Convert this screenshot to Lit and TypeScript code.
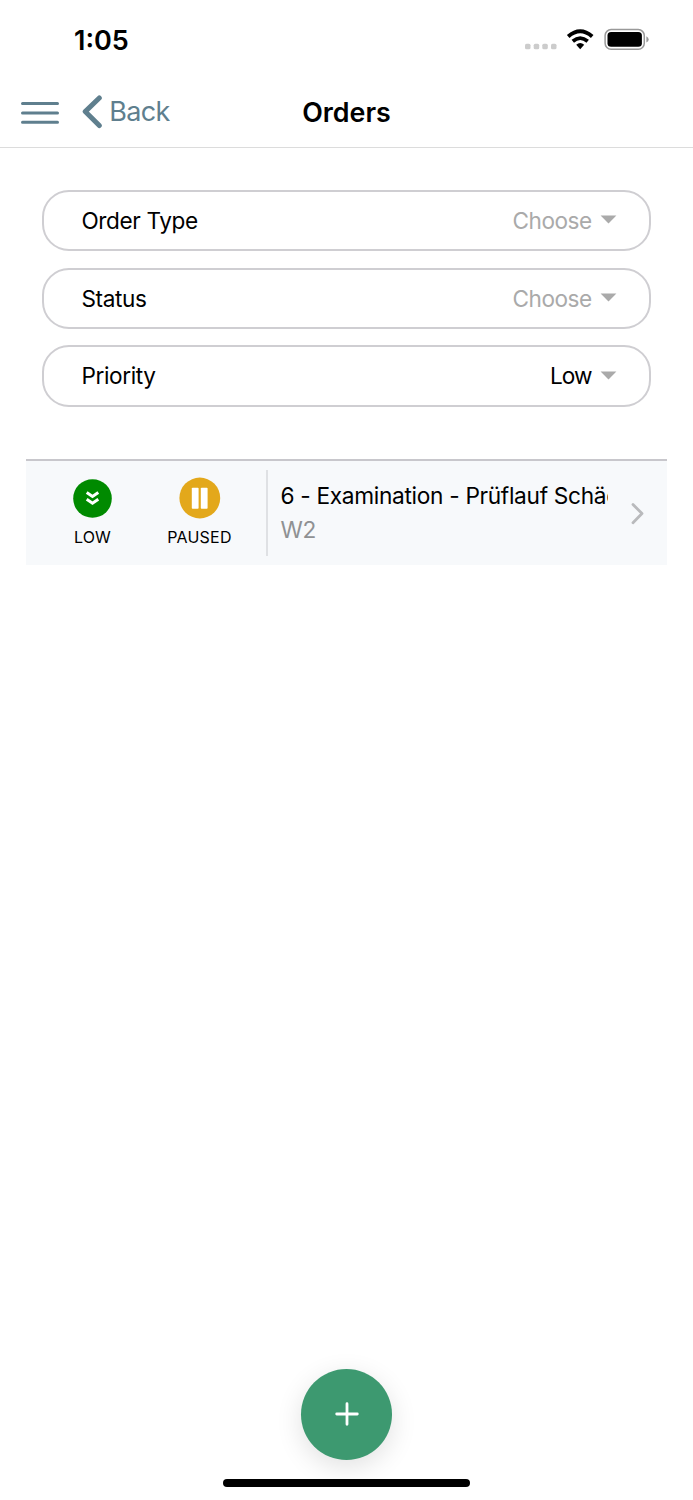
import { LitElement, html, svg, css } from "lit";
import { customElement, property } from "lit/decorators.js";

@customElement("filter-select")
class FilterSelect extends LitElement {
  @property() label = "";
  @property() value = "";

  static styles = css`
    :host { display: block; }
    .field {
      box-sizing: border-box;
      height: 61.2px;
      border: 2px solid #cfced2;
      border-radius: 27px;
      padding: 0 32.2px 0 37.4px;
      display: flex;
      align-items: center;
      font-size: 22.6px;
      letter-spacing: -0.38px;
      color: #000;
    }
    .label { flex: 1; }
    .placeholder { color: #aaa; letter-spacing: -0.5px; }
    .value { letter-spacing: -0.9px; }
    .arrow { margin: 0 0 1.5px 8.2px; display: block; }
  `;

  render() {
    return html`<div class="field">
      <span class="label">${this.label}</span>
      <span class=${this.value ? "value" : "placeholder"}>${this.value || "Choose"}</span>
      <svg class="arrow" width="17" height="9" viewBox="0 0 17 9"><path d="M.6 .4H16.4L8.5 8.4z" fill="#aaa" /></svg>
    </div>`;
  }
}

@customElement("app-root")
class AppRoot extends LitElement {
  static styles = css`
    :host {
      display: flex;
      flex-direction: column;
      box-sizing: border-box;
      width: 693px;
      height: 1500px;
      overflow: hidden;
      background: #fff;
      color: #000;
      font-family: Inter, "Liberation Sans", sans-serif;
      white-space: nowrap;
    }
    svg { display: block; flex: none; }
    .status { height: 79px; display: flex; align-items: center; padding: 1px 44px 0 74px; box-sizing: border-box; }
    .time { flex: 1; font-size: 27px; font-weight: 600; }
    .bar {
      height: 69px;
      box-sizing: border-box;
      border-bottom: 1px solid #dcdcdc;
      display: grid;
      grid-template-columns: 1fr auto 1fr;
      align-items: center;
      padding-bottom: 2px;
    }
    .nav { display: flex; align-items: center; padding-left: 21px; color: #5f7f8e; }
    .menu { margin-top: 2px; }
    .chevron { margin: 0 6.2px 0 23px; }
    .back { font-size: 27px; letter-spacing: -0.65px; padding-bottom: 1px; }
    .title { font-size: 26.8px; font-weight: 600; }
    .filters { display: grid; gap: 16.5px; padding: 42px 42px 52px; }
    .row {
      margin: 0 26px;
      height: 106.5px;
      box-sizing: border-box;
      border-top: 2px solid #c8c7cc;
      background: #f7f9fb;
      display: flex;
    }
    .badges { width: 240px; display: flex; box-sizing: border-box; }
    .badge { display: flex; flex-direction: column; align-items: center; font-size: 16px; letter-spacing: 0.2px; }
    .low { width: 133px; }
    .paused { width: 81px; }
    .disc { height: 42px; margin-top: 16.5px; display: flex; align-items: center; }
    .caption { line-height: 20px; margin-top: 7.5px; }
    .divider { width: 1.6px; height: 86px; margin-top: 9px; background: #dfe1e4; }
    .text { margin-left: 12.9px; width: 328px; overflow: hidden; padding-top: 18px; font-size: 22.7px; line-height: 34px; }
    .main { letter-spacing: -0.32px; }
    .sub { color: #8f9193; letter-spacing: -0.3px; }
    .more { margin: 41px 0 0 23px; }
    .foot { flex: 1; display: flex; flex-direction: column; align-items: center; justify-content: flex-end; padding-bottom: 12.7px; }
    .fab {
      width: 91px;
      height: 91px;
      border-radius: 50%;
      background: #3d9970;
      box-shadow: 0 7px 27px rgba(0, 0, 0, 0.12);
      display: flex;
      align-items: center;
      justify-content: center;
    }
    .home { width: 247.5px; height: 8.6px; border-radius: 5px; background: #000; margin-top: 19.2px; }
  `;

  render() {
    return html`
      <div class="status">
        <span class="time">1:05</span>
        <svg width="125" height="24" viewBox="524 28 125 24">
          ${[525, 533.7, 542.3, 551].map(
            (x) => svg`<rect x=${x} y="43.7" width="5.5" height="5.6" rx="1.6" fill="#ccc" />`,
          )}
          <path d="M568.2 36.4Q580.2 26.2 592.2 36.4" fill="none" stroke="#000" stroke-width="4" />
          <path d="M572.8 41.2Q580.2 35.1 587.7 41.2" fill="none" stroke="#000" stroke-width="3.8" />
          <path d="M576.2 44.8Q580.2 41.4 584.2 44.8L580.2 49.2z" />
          <rect x="605.1" y="29.6" width="39.2" height="19.6" rx="6" fill="none" stroke="#999" stroke-width="1.5" />
          <rect x="607.5" y="32" width="34.4" height="14.8" rx="3.6" />
          <path d="M646.4 36.2Q648.7 37.4 648.7 39.4T646.4 42.6z" fill="#999" />
        </svg>
      </div>
      <div class="bar">
        <div class="nav">
          <svg class="menu" width="38" height="24" viewBox="0 0 38 24">
            <path d="M1.5 2.5H36.5M1.5 12H36.5M1.5 21.3H36.5" stroke="currentColor" stroke-width="3" stroke-linecap="round" />
          </svg>
          <svg class="chevron" width="21" height="34" viewBox="0 0 21 34">
            <path d="M17.3 3L3.2 16.6L17.3 30.6" fill="none" stroke="currentColor" stroke-width="5" stroke-linecap="round" stroke-linejoin="round" />
          </svg>
          <span class="back">Back</span>
        </div>
        <span class="title">Orders</span>
      </div>
      <div class="filters">
        <filter-select label="Order Type"></filter-select>
        <filter-select label="Status"></filter-select>
        <filter-select label="Priority" value="Low"></filter-select>
      </div>
      <div class="row">
        <div class="badges">
          <div class="badge low">
            <div class="disc">
              <svg width="39" height="39" viewBox="0 0 39 39">
                <circle cx="19.5" cy="19.5" r="19.3" fill="#008a00" />
                <path d="M13.7 13.5L19.5 17.4L25.3 13.5M13.7 20.3L19.5 24.2L25.3 20.3" fill="none" stroke="#fff" stroke-width="3" />
              </svg>
            </div>
            <span class="caption">LOW</span>
          </div>
          <div class="badge paused">
            <div class="disc">
              <svg width="42" height="42" viewBox="0 0 42 42">
                <circle cx="20.8" cy="21" r="20.4" fill="#e3a81b" />
                <rect x="12.8" y="10.7" width="6.8" height="21" rx=".8" fill="#fff" />
                <rect x="21.8" y="10.7" width="6.8" height="21" rx=".8" fill="#fff" />
              </svg>
            </div>
            <span class="caption">PAUSED</span>
          </div>
        </div>
        <div class="divider"></div>
        <div class="text">
          <div class="main">6 - Examination - Prüflauf Schäden</div>
          <div class="sub">W2</div>
        </div>
        <svg class="more" width="14" height="24" viewBox="0 0 14 24">
          <path d="M2 2.5L11 11.6L2 20.8" fill="none" stroke="#b9babc" stroke-width="2.8" stroke-linecap="round" stroke-linejoin="round" />
        </svg>
      </div>
      <div class="foot">
        <div class="fab">
          <svg width="24" height="24" viewBox="0 0 24 24">
            <path d="M12 1.7V22.3M1.7 12H22.3" stroke="#fff" stroke-width="2.8" stroke-linecap="round" />
          </svg>
        </div>
        <div class="home"></div>
      </div>
    `;
  }
}
